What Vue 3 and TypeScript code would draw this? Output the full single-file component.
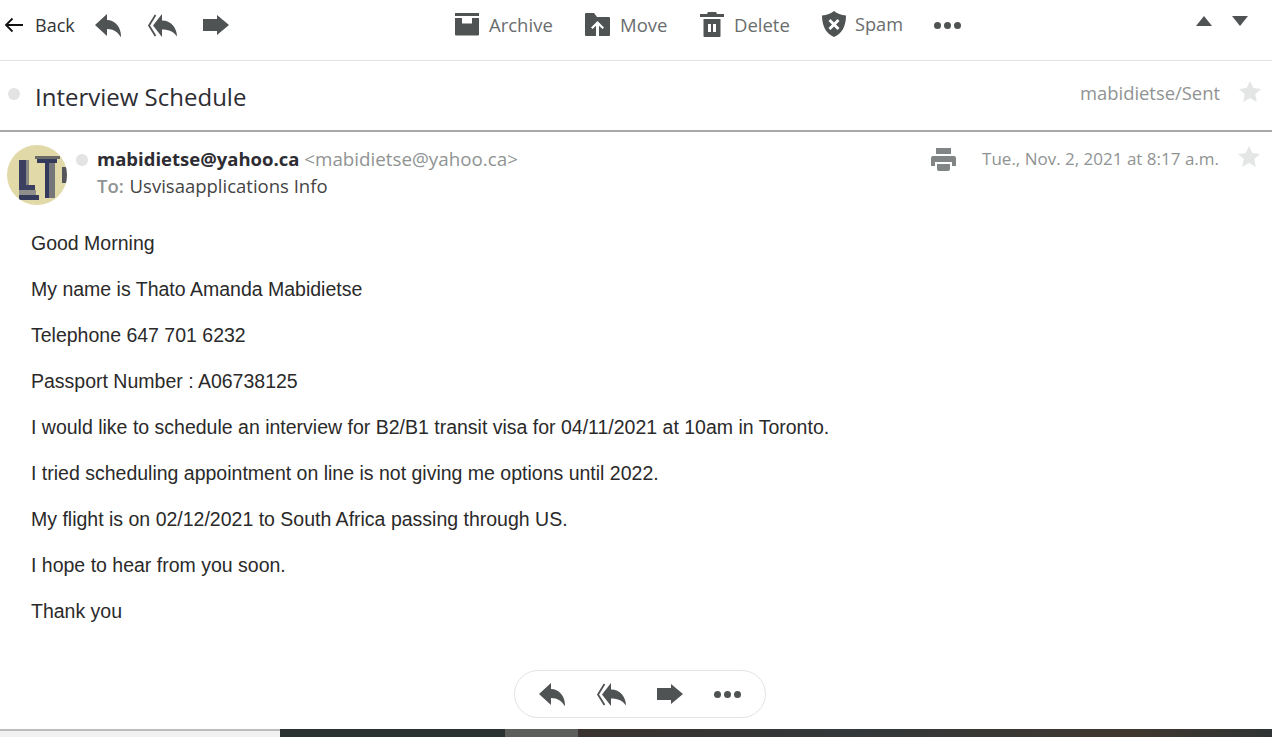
<script setup lang="ts">
const bodyLines: string[] = [
  'Good Morning',
  'My name is Thato Amanda Mabidietse',
  'Telephone 647 701 6232',
  'Passport Number : A06738125',
  'I would like to schedule an interview for B2/B1 transit visa for 04/11/2021 at 10am in Toronto.',
  'I tried scheduling appointment on line is not giving me options until 2022.',
  'My flight is on 02/12/2021 to South Africa passing through US.',
  'I hope to hear from you soon.',
  'Thank you',
]
</script>

<template>
  <div class="page">
    <header class="toolbar">
      <div class="tool-left">
        <svg class="back-arrow" width="20" height="16" viewBox="0 0 20 16"><path d="M19 8H2M8.500 1.500 2 8l6.500 6.500" fill="none" stroke="#111" stroke-width="1.800" /></svg>
        <span class="back-label">Back</span>
        <svg class="ic reply" width="26" height="23" viewBox="0 0 26 23"><path d="M0 11 12 0v6c8 0 14 7 14 16l-.5 1c-2.500-5-7-8-13.500-8v7Z" /></svg>
        <svg class="ic reply-all" width="30" height="23" viewBox="0 0 30 23"><path d="M8.500 1 2 11.500 8.500 22" fill="none" stroke="#505353" stroke-width="1.800" /><path d="M6 11.500 15 0v6.500c9 0 15 7.500 15 16-3-4.500-8-7-15-7V23Z" /></svg>
        <svg class="ic forward" width="26" height="20" viewBox="0 0 26 20"><path d="M0 4h14V0l12 10-12 10v-4H0Z" /></svg>
      </div>

      <div class="tool-center">
        <div class="action action-archive">
          <svg width="24" height="23" viewBox="0 0 24 23"><path d="M0 0h24v3H0ZM0 5h7v5.500h10V5h7v16.500a1 1 0 0 1-1 1H1a1 1 0 0 1-1-1Z" /></svg>
          <span>Archive</span>
        </div>
        <div class="action action-move">
          <svg width="25" height="23" viewBox="0 0 25 23"><path d="M0 1a1 1 0 0 1 1-1h8l3 4h12a1 1 0 0 1 1 1v17a1 1 0 0 1-1 1H1a1 1 0 0 1-1-1Zm12.500 7L6 14.500l1.500 1.500 3.500-3.300V23h3V12.700l3.500 3.300 1.500-1.500Z" fill-rule="evenodd" /></svg>
          <span>Move</span>
        </div>
        <div class="action action-delete">
          <svg width="24" height="25" viewBox="0 0 24 25"><path d="M8 0h8l1 2h7v3H0V2h7ZM3.500 7h17v17a1 1 0 0 1-1 1h-15a1 1 0 0 1-1-1Zm4.500 5v8h3v-8Zm5 0v8h3v-8Z" fill-rule="evenodd" /></svg>
          <span>Delete</span>
        </div>
        <div class="action action-spam">
          <svg width="24" height="26" viewBox="0 0 24 26"><path d="M12 0c3 2.500 7 4 12 4.500C24 15 20 22.500 12 26 4 22.500 0 15 0 4.500 5 4 9 2.500 12 0Zm-3.500 8L6.500 10l3.500 3.500L6.500 17l2 2 3.500-3.500 3.500 3.500 2-2-3.500-3.500 3.500-3.500-2-2-3.500 3.500Z" fill-rule="evenodd" /></svg>
          <span>Spam</span>
        </div>
        <div class="dots">
          <i /><i /><i />
        </div>
      </div>

      <div class="tool-right">
        <svg width="16" height="10" viewBox="0 0 16 10"><path d="M8 0l8 10H0Z" /></svg>
        <svg width="16" height="10" viewBox="0 0 16 10"><path d="M0 0h16L8 10Z" /></svg>
      </div>
    </header>

    <section class="subject-row">
      <span class="status-dot subject-dot" />
      <h1 class="subject">Interview Schedule</h1>
      <span class="folder">mabidietse/Sent</span>
      <svg class="star subject-star" width="22" height="21" viewBox="0 0 22 21"><path d="M11 0l3.300 7 7.700.9-5.700 5.200L17.800 21 11 17.100 4.200 21l1.500-7.900L0 7.900 7.700 7Z" /></svg>
    </section>

    <section class="message-head">
      <svg class="avatar" width="60" height="60" viewBox="0 0 60 60">
        <defs>
          <clipPath id="avatar-clip"><circle cx="30" cy="30" r="30" /></clipPath>
        </defs>
        <g clip-path="url(#avatar-clip)">
          <rect width="60" height="60" fill="#e1d9a8" />
          <g class="avatar-marks">
            <path d="M12 15h7v30h-7Z" fill="#3b4060" />
            <path d="M19 15h3v25h-3Z" fill="#8a8a80" />
            <path d="M12 40h16v5H12Z" fill="#3b4060" />
            <path d="M12 45h17v5H12Z" fill="#8e8e8a" />
            <path d="M12 50h20v5H12Z" fill="#333a5c" />
            <path d="M28 11h25v3H28Z" fill="#6a6a68" />
            <path d="M30 14h20v4H30Z" fill="#333a5c" />
            <path d="M38 18h4v35h-4Z" fill="#333a5c" />
            <path d="M42 18h6v35h-6Z" fill="#75767a" />
            <path d="M55 22h5v16h-5Z" fill="#55565c" />
          </g>
        </g>
      </svg>
      <span class="status-dot head-dot" />
      <div class="people">
        <div class="from"><b>mabidietse@yahoo.ca</b> <span>&lt;mabidietse@yahoo.ca&gt;</span></div>
        <div class="to"><b>To:</b> Usvisaapplications Info</div>
      </div>
      <svg class="printer" width="25" height="23" viewBox="0 0 25 23"><path d="M5 0h15v6H5ZM2 8h21a2 2 0 0 1 2 2v8h-4v-4H4v4H0v-8a2 2 0 0 1 2-2ZM6 16h13v5a2 2 0 0 1-2 2H8a2 2 0 0 1-2-2Z" /></svg>
      <span class="date">Tue., Nov. 2, 2021 at 8:17 a.m.</span>
      <svg class="star head-star" width="22" height="21" viewBox="0 0 22 21"><path d="M11 0l3.300 7 7.700.9-5.700 5.200L17.800 21 11 17.100 4.200 21l1.500-7.900L0 7.900 7.700 7Z" /></svg>
    </section>

    <main class="message-body">
      <p v-for="line in bodyLines" :key="line">{{ line }}</p>
    </main>

    <div class="pill-wrap">
      <div class="pill">
        <svg width="26" height="23" viewBox="0 0 26 23"><path d="M0 11 12 0v6c8 0 14 7 14 16l-.5 1c-2.500-5-7-8-13.500-8v7Z" /></svg>
        <svg width="30" height="23" viewBox="0 0 30 23"><path d="M8.500 1 2 11.500 8.500 22" fill="none" stroke="#505353" stroke-width="1.800" /><path d="M6 11.500 15 0v6.500c9 0 15 7.500 15 16-3-4.500-8-7-15-7V23Z" /></svg>
        <svg width="26" height="20" viewBox="0 0 26 20"><path d="M0 4h14V0l12 10-12 10v-4H0Z" /></svg>
        <div class="dots pill-dots"><i /><i /><i /></div>
      </div>
    </div>

    <footer class="strip">
      <div class="strip-light" />
      <div class="strip-dark" />
      <div class="strip-mid" />
      <div class="strip-photo" />
    </footer>
  </div>
</template>

<style>
html, body {
  margin: 0;
  background: #fff;
}
</style>

<style scoped>
.page {
  width: 1272px;
  height: 737px;
  overflow: hidden;
  display: flex;
  flex-direction: column;
  font-family: "Open Sans", "Noto Sans", sans-serif;
}

svg {
  flex: none;
  fill: #505353;
}

.toolbar {
  height: 50px;
  padding-bottom: 10px;
  flex: none;
  display: flex;
  align-items: center;
  border-bottom: 1px solid #e2e2e2;
  box-sizing: content-box;
}

.tool-left {
  width: 455px;
  flex: none;
  display: flex;
  align-items: center;
}

.back-arrow {
  margin-left: 4px;
  margin-right: 11px;
}

.back-label {
  font-size: 18px;
  color: #333;
  width: 60px;
}

.ic.reply-all {
  margin-left: 26px;
}

.ic.forward {
  margin-left: 26px;
}

.tool-center {
  display: flex;
  align-items: center;
  width: 721px;
  flex: none;
}

.action {
  display: flex;
  align-items: center;
  gap: 10px;
  font-size: 18.5px;
  color: #6a6d6d;
  margin-bottom: 2px;
}

.action-archive {
  width: 130px;
}

.action-move {
  width: 115px;
}

.action-delete {
  width: 122px;
}

.action-spam {
  width: 112px;
  gap: 9px;
  font-size: 18.2px;
}

.dots {
  display: flex;
  gap: 3px;
}

.dots i {
  width: 7px;
  height: 7px;
  border-radius: 50%;
  background: #505353;
}

.tool-right {
  display: flex;
  gap: 20px;
  margin-left: 20px;
  margin-bottom: 8px;
}

.subject-row {
  height: 69px;
  flex: none;
  display: flex;
  align-items: center;
  border-bottom: 2px solid #a8a8a8;
  padding-right: 11px;
}

.status-dot {
  width: 12px;
  height: 12px;
  border-radius: 50%;
  background: #e3e3e3;
  flex: none;
}

.subject-dot {
  margin-left: 8px;
  margin-bottom: 4px;
}

.subject {
  margin: 2px 0 0 15px;
  font-size: 24px;
  font-weight: 400;
  color: #2d2d33;
  flex: 1;
}

.folder {
  font-size: 18.4px;
  color: #8f9393;
  margin-right: 19px;
  margin-bottom: 6px;
}

.star {
  fill: #e4e6e6;
}

.subject-star {
  margin-bottom: 8px;
}

.head-star {
  margin-top: 1px;
}

.message-head {
  height: 88px;
  flex: none;
  display: flex;
  align-items: flex-start;
  padding: 13px 12px 0 7px;
  box-sizing: border-box;
  font-size: 18.5px;
}

.avatar-marks {
  filter: blur(0.6px);
}

.head-dot {
  margin: 9px 9px 0 9px;
}

.people {
  flex: 1;
  line-height: 26px;
}

.from {
  line-height: 27px;
}

.from b {
  color: #2d2d33;
  font-weight: 700;
}

.from span {
  color: #8f9393;
  font-size: 18.8px;
}

.to {
  color: #444;
}

.to b {
  color: #8f9393;
  font-weight: 600;
  margin-right: 1px;
}

.printer {
  fill: #828585;
  margin: 3px 26px 0 0;
}

.date {
  color: #8f9393;
  font-size: 17px;
  line-height: 27px;
  margin-right: 19px;
}

.message-body {
  padding-left: 31px;
  height: 450px;
  flex: none;
  font-family: "Liberation Sans", Arial, sans-serif;
  font-size: 19.5px;
  color: #2a2a2a;
}

.message-body p {
  margin: 0;
  line-height: 46px;
}

.pill-wrap {
  display: flex;
  justify-content: center;
  padding-left: 8px;
}

.pill {
  width: 252px;
  height: 48px;
  box-sizing: border-box;
  border: 1px solid #e4e4e4;
  border-radius: 24px;
  display: flex;
  align-items: center;
  justify-content: space-between;
  padding: 0 24px;
}

.strip {
  margin-top: 11px;
  display: flex;
  height: 8px;
  flex: none;
}

.strip-light {
  width: 280px;
  background: #f1f1f1;
  border-top: 2px solid #bdbdbd;
  box-sizing: border-box;
}

.strip-dark {
  width: 225px;
  background: #2b3332;
}

.strip-mid {
  width: 73px;
  background: #5c5e5c;
}

.strip-photo {
  flex: 1;
  background: linear-gradient(90deg, #3a3330, #33383a 40%, #40382f 80%, #2f3434);
}
</style>
